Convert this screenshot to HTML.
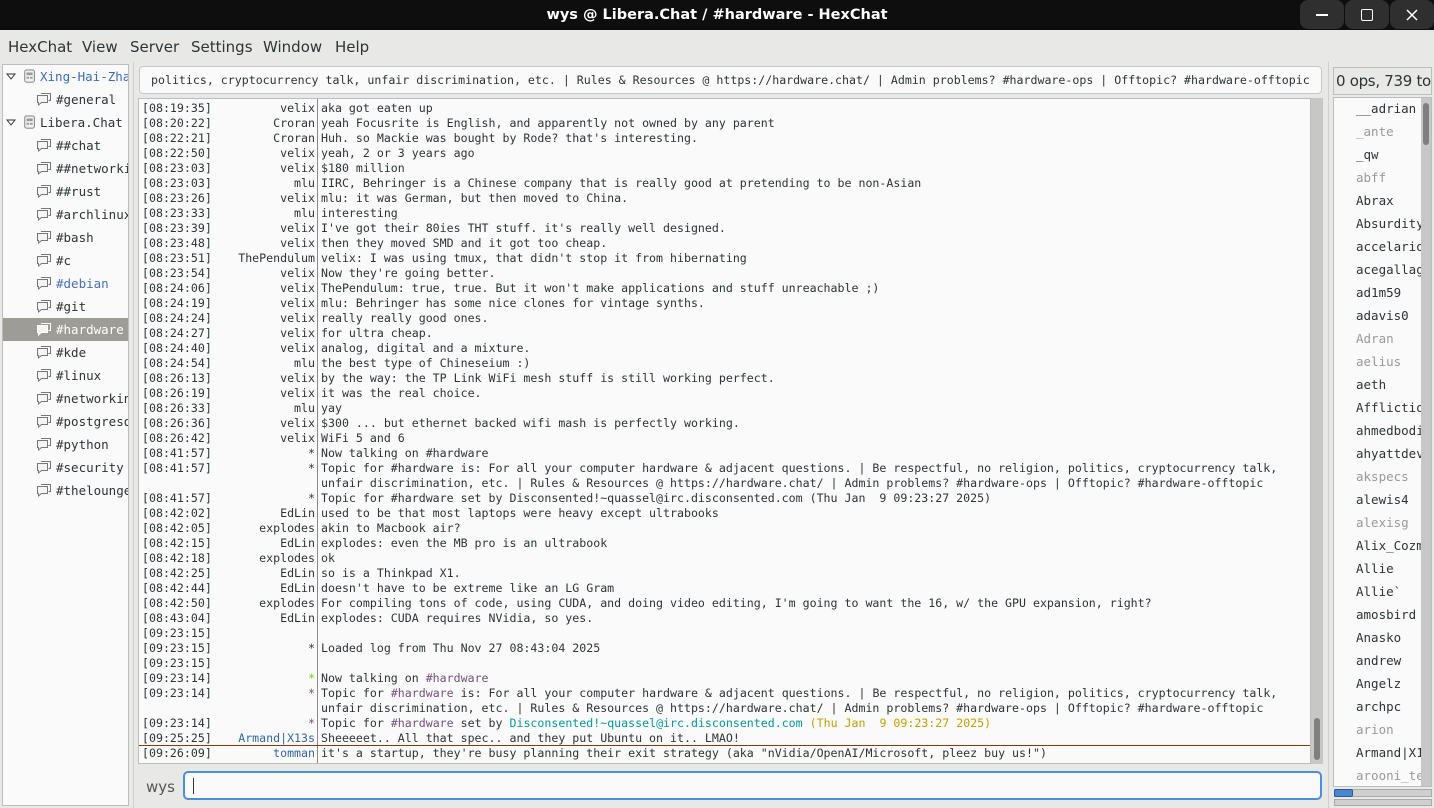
<!DOCTYPE html>
<html><head><meta charset="utf-8"><style>
*{margin:0;padding:0;box-sizing:border-box}
body{width:1434px;height:808px;background:#e8e8e7;position:relative;overflow:hidden;font-family:"DejaVu Sans Mono","Liberation Mono",monospace;font-size:12px;color:#2e3436}
.abs{position:absolute}
#title{left:0;top:0;width:1434px;height:30px;background:#0e0e0e;color:#fff;font:bold 14.5px "DejaVu Sans","Liberation Sans",sans-serif;text-align:center;line-height:30px}
.wb{top:0;width:44px;height:29px;background:#2f2f2f;border-radius:8px}
#menu{left:0;top:30px;width:1434px;height:32px;font:15px "DejaVu Sans","Liberation Sans",sans-serif;color:#2e3436}
#menu span{position:absolute;top:8px}
#tree{left:2px;top:64px;width:127px;height:742px;background:#fafafa;border:1px solid #bdbdbd;overflow:hidden}
.ti{position:absolute;height:23px;line-height:23px;white-space:nowrap;font-size:12.5px}
.sel{background:#9d9c97;color:#fff}
.ci{position:absolute;width:16px;height:14px}
#topic{left:139px;top:66px;width:1183px;height:28px;background:#fafafa;border:1px solid #c8c8c8;border-radius:4px;line-height:26px;padding-left:11px;font-size:11.6px;white-space:nowrap;overflow:hidden}
#chat{left:138px;top:98px;width:1173px;height:666px;background:#fafafa;border:1px solid #bdbdbd;overflow:hidden;font-size:11.6px}
.l{position:absolute;left:3px;height:15px;line-height:15px;white-space:pre;width:1170px}
.l .n{position:absolute;left:0;width:173px;text-align:right}
.l .t{position:absolute;left:179px}
.g{color:#73d216}.p{color:#75507b}.b{color:#3465a4}.tl{color:#06989a}.o{color:#c4a000}
#sb{left:1311px;top:98px;width:12px;height:666px;background:#c7c7c7}
#input{left:183px;top:771px;width:1139px;height:29px;background:#fafafa;border:2px solid #4a90d9;border-radius:5px}
#ulh{left:1333px;top:67px;width:99px;height:28px;border:1px solid #bdbdbd;font:15px "DejaVu Sans","Liberation Sans",sans-serif;line-height:26px;padding-left:2px;white-space:nowrap;overflow:hidden;letter-spacing:-0.3px}
#ul{left:1333px;top:97px;width:99px;height:690px;background:#fafafa;border:1px solid #bdbdbd;overflow:hidden}
.u{position:absolute;left:22px;font-size:12.5px;white-space:nowrap}
.aw{color:#999}
</style></head><body>
<div id="title" class="abs">wys @ Libera.Chat / #hardware - HexChat</div>
<div class="abs wb" style="left:1300px"><div class="abs" style="left:16px;top:14px;width:12px;height:1.5px;background:#fff"></div></div>
<div class="abs wb" style="left:1345px"><div class="abs" style="left:16px;top:9px;width:12px;height:12px;border:1.5px solid #fff;border-radius:2px"></div></div>
<div class="abs wb" style="left:1390px;width:44px"><svg class="abs" style="left:16px;top:9px" width="12" height="12"><path d="M1 1L11 11M11 1L1 11" stroke="#fff" stroke-width="1.5"/></svg></div>
<div id="menu" class="abs"><span style="left:8px">HexChat</span><span style="left:82px">View</span><span style="left:130px">Server</span><span style="left:191px">Settings</span><span style="left:263px">Window</span><span style="left:335px">Help</span></div>
<div class="abs" style="left:133px;top:62px;width:1px;height:746px;background:#cfcfcf"></div>
<div class="abs" style="left:1328px;top:62px;width:1px;height:746px;background:#cfcfcf"></div>
<div id="tree" class="abs">
</div>
<div id="topic" class="abs">politics, cryptocurrency talk, unfair discrimination, etc. | Rules &amp; Resources @ https://hardware.chat/ | Admin problems? #hardware-ops | Offtopic? #hardware-offtopic</div>
<div id="chat" class="abs"></div>
<div id="sb" class="abs"><div class="abs" style="left:3px;top:620px;width:6px;height:42px;background:#7f7f7f;border-radius:3px"></div></div>
<div class="abs" style="left:146px;top:778px;font:15px 'DejaVu Sans','Liberation Sans',sans-serif;color:#555">wys</div>
<div id="input" class="abs"><div class="abs" style="left:8px;top:5px;width:1px;height:16px;background:#2e3436"></div></div>
<div id="ulh" class="abs">0 ops, 739 total</div>
<div id="ul" class="abs"><div class="abs" style="left:87px;top:0;width:11px;height:690px;background:#c7c7c7"><div class="abs" style="left:2px;top:5px;width:6px;height:42px;background:#7f7f7f;border-radius:3px"></div></div></div>
<div class="abs" style="left:1334px;top:789px;width:98px;height:8px;background:#cfcfcf;border:1px solid #aaa"></div>
<div class="abs" style="left:1334px;top:789px;width:19px;height:8px;background:#4a86cf;border:1px solid #2a5a9a;border-radius:2px"></div>
<div class="abs" style="left:1334px;top:799px;width:98px;height:7px;background:#cfcfcf;border:1px solid #aaa"></div>
<script>
var tree=document.getElementById('tree');
var srv='<svg class="ci" style="top:4px" viewBox="0 0 16 16" width="14" height="15"><rect x="2" y="1" width="11" height="14" rx="2" fill="#eee" stroke="#777"/><rect x="4" y="4" width="7" height="3" fill="#999"/><rect x="4" y="9" width="3" height="2" fill="#999"/><rect x="8" y="9" width="3" height="2" fill="#999"/></svg>';
function ch(c){return '<svg class="ci" style="top:4px" viewBox="0 0 16 14" width="16" height="14"><path d="M5 1.5h9.5v7h-2" fill="none" stroke="'+c+'"/><path d="M1.5 3.5h10v7h-6l-3 2.5v-2.5h-1z" fill="#f4f4f4" stroke="'+c+'"/></svg>';}
var items=[['Xing-Hai-Zhang',0,'#3d6cb5'],['#general',1],['Libera.Chat',0],['##chat',1],['##networking',1],['##rust',1],['#archlinux',1],['#bash',1],['#c',1],['#debian',1,'#4a6fb5'],['#git',1],['#hardware',1,'sel'],['#kde',1],['#linux',1],['#networking',1],['#postgresql',1],['#python',1],['#security',1],['#thelounge',1]];
var h='';items.forEach(function(it,i){var y=i*23;var cls='ti',st='';if(it[2]=='sel'){cls+=' sel';}
else if(it[2])st='color:'+it[2];
if(it[1]==0){h+='<div class="'+cls+'" style="top:'+y+'px;left:0;width:127px"><svg class="abs" style="left:3px;top:8px" width="10" height="7"><path d="M1 1h8l-4 5z" fill="none" stroke="#333"/></svg><span class="abs" style="left:19px;top:0">'+srv+'</span><span class="abs" style="left:37px;'+st+'">'+it[0]+'</span></div>';}
else{h+='<div class="'+cls+'" style="top:'+y+'px;left:0;width:127px"><span class="abs" style="left:33px;top:0">'+ch(it[2]=='sel'?'#fff':'#777')+'</span><span class="abs" style="left:53px;'+st+'">'+it[0]+'</span></div>';}});
tree.innerHTML=h;
var L=[
['08:19:35','velix','aka got eaten up'],['08:20:22','Croran','yeah Focusrite is English, and apparently not owned by any parent'],['08:22:21','Croran',"Huh. so Mackie was bought by Rode? that's interesting."],['08:22:50','velix','yeah, 2 or 3 years ago'],['08:23:03','velix','$180 million'],['08:23:03','mlu','IIRC, Behringer is a Chinese company that is really good at pretending to be non-Asian'],['08:23:26','velix','mlu: it was German, but then moved to China.'],['08:23:33','mlu','interesting'],['08:23:39','velix',"I've got their 80ies THT stuff. it's really well designed."],['08:23:48','velix','then they moved SMD and it got too cheap.'],['08:23:51','ThePendulum',"velix: I was using tmux, that didn't stop it from hibernating"],['08:23:54','velix',"Now they're going better."],['08:24:06','velix',"ThePendulum: true, true. But it won't make applications and stuff unreachable ;)"],['08:24:19','velix','mlu: Behringer has some nice clones for vintage synths.'],['08:24:24','velix','really really good ones.'],['08:24:27','velix','for ultra cheap.'],['08:24:40','velix','analog, digital and a mixture.'],['08:24:54','mlu','the best type of Chineseium :)'],['08:26:13','velix','by the way: the TP Link WiFi mesh stuff is still working perfect.'],['08:26:19','velix','it was the real choice.'],['08:26:33','mlu','yay'],['08:26:36','velix','$300 ... but ethernet backed wifi mash is perfectly working.'],['08:26:42','velix','WiFi 5 and 6'],
['08:41:57','*','Now talking on #hardware'],['08:41:57','*','Topic for #hardware is: For all your computer hardware &amp; adjacent questions. | Be respectful, no religion, politics, cryptocurrency talk,'],['','','unfair discrimination, etc. | Rules &amp; Resources @ https://hardware.chat/ | Admin problems? #hardware-ops | Offtopic? #hardware-offtopic'],['08:41:57','*','Topic for #hardware set by Disconsented!~quassel@irc.disconsented.com (Thu Jan  9 09:23:27 2025)'],
['08:42:02','EdLin','used to be that most laptops were heavy except ultrabooks'],['08:42:05','explodes','akin to Macbook air?'],['08:42:15','EdLin','explodes: even the MB pro is an ultrabook'],['08:42:18','explodes','ok'],['08:42:25','EdLin','so is a Thinkpad X1.'],['08:42:44','EdLin',"doesn't have to be extreme like an LG Gram"],['08:42:50','explodes',"For compiling tons of code, using CUDA, and doing video editing, I'm going to want the 16, w/ the GPU expansion, right?"],['08:43:04','EdLin','explodes: CUDA requires NVidia, so yes.'],['09:23:15','',''],['09:23:15','*','Loaded log from Thu Nov 27 08:43:04 2025'],['09:23:15','',''],
['09:23:14','<span class="g">*</span>','Now talking on <span class="p">#hardware</span>'],['09:23:14','<span class="p">*</span>','Topic for <span class="p">#hardware</span> is: For all your computer hardware &amp; adjacent questions. | Be respectful, no religion, politics, cryptocurrency talk,'],['','','unfair discrimination, etc. | Rules &amp; Resources @ https://hardware.chat/ | Admin problems? #hardware-ops | Offtopic? #hardware-offtopic'],['09:23:14','<span class="p">*</span>','Topic for <span class="p">#hardware</span> set by <span class="tl">Disconsented!~quassel@irc.disconsented.com</span> <span class="o">(Thu Jan  9 09:23:27 2025)</span>'],
['09:25:25','<span class="b">Armand|X13s</span>','Sheeeeet.. All that spec.. and they put Ubuntu on it.. LMAO!'],['09:26:09','<span class="b">tomman</span>','it\'s a startup, they\'re busy planning their exit strategy (aka "nVidia/OpenAI/Microsoft, pleez buy us!")']];
var c='';L.forEach(function(r,i){var y=2+i*15;c+='<div class="l" style="top:'+y+'px">'+(r[0]?'['+r[0]+']':'')+'<span class="n">'+r[1]+'</span><span class="t">'+r[2]+'</span></div>';});
c+='<div class="abs" style="left:178px;top:0;width:1px;height:666px;background:#8a8a8a"></div>';
c+='<div class="abs" style="left:0;top:646px;width:1172px;height:1px;background:#8b3a0e"></div>';
document.getElementById('chat').innerHTML=c;
var U=[['__adrian'],['_ante',1],['_qw'],['abff',1],['Abrax'],['Absurdity'],['accelario'],['acegallag'],['ad1m59'],['adavis0'],['Adran',1],['aelius',1],['aeth'],['Afflictio'],['ahmedbodi'],['ahyattdev'],['akspecs',1],['alewis4'],['alexisg',1],['Alix_Cozm'],['Allie'],['Allie`'],['amosbird'],['Anasko'],['andrew'],['Angelz'],['archpc'],['arion',1],['Armand|X1'],['arooni_te',1]];
var u=document.getElementById('ul');var s='';U.forEach(function(x,i){s+='<div class="u'+(x[1]?' aw':'')+'" style="top:'+(3+i*23)+'px">'+x[0]+'</div>';});u.insertAdjacentHTML('afterbegin',s);
</script>
</body></html>
